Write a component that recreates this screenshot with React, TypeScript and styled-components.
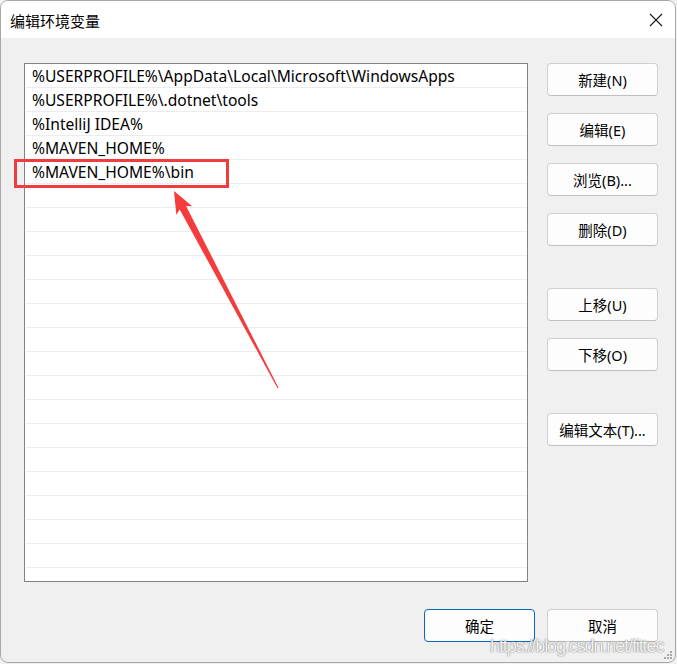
import React from "react";
import styled, { createGlobalStyle } from "styled-components";

const Global = createGlobalStyle`
  html, body { margin: 0; padding: 0; background: #f0f0f0; }
  body { font-family: "Noto Sans", "Noto Sans CJK SC", sans-serif; }
`;

const Window = styled.div`
  position: relative;
  box-sizing: border-box;
  width: 676px;
  height: 663px;
  border: 1px solid #a8a8a8;
  border-radius: 8px;
  overflow: hidden;
  background: #f0f0f0;
  display: flex;
  flex-direction: column;
`;

const TitleBar = styled.div`
  height: 37px;
  background: #ffffff;
  display: flex;
  align-items: center;
  justify-content: space-between;
  padding: 0 12px 0 9px;
  flex: none;
`;

const Title = styled.span`
  font-family: "Noto Sans CJK SC", sans-serif;
  font-size: 15px;
  color: #000;
  line-height: 1;
  margin-top: 1px;
`;

const CloseIcon = styled.svg`
  width: 14px;
  height: 14px;
`;

const Body = styled.div`
  flex: 1;
  display: flex;
  flex-direction: column;
  padding: 25px 17px 0 23px;
`;

const Main = styled.div`
  display: flex;
  gap: 19px;
`;

const List = styled.div`
  box-sizing: border-box;
  width: 504px;
  height: 519px;
  border: 1px solid #838383;
  background: #ffffff;
  overflow: hidden;
`;

const Row = styled.div`
  height: 23px;
  margin-left: 1px;
  border-bottom: 1px solid #ececec;
  display: flex;
  align-items: center;
  padding-left: 6px;
  padding-top: 1px;
  box-sizing: border-box;
  height: 24px;
  font-size: 15.6px;
  color: #000;
  white-space: nowrap;
`;

const Buttons = styled.div`
  display: flex;
  flex-direction: column;
  width: 111px;
`;

const Button = styled.button<{ $top?: number; $primary?: boolean }>`
  box-sizing: border-box;
  width: 111px;
  height: 33px;
  margin-top: ${(p) => p.$top ?? 0}px;
  border: 1px solid ${(p) => (p.$primary ? "#0a67c0" : "#d0d0d0")};
  border-bottom-color: ${(p) => (p.$primary ? "#0a67c0" : "#c0c0c0")};
  border-radius: 4px;
  background: #fdfdfd;
  font-family: "Noto Sans", "Noto Sans CJK SC", sans-serif;
  font-size: 14.5px;
  color: #000;
  padding: 0;
  display: flex;
  align-items: center;
  justify-content: center;
`;

const Footer = styled.div`
  display: flex;
  justify-content: flex-end;
  gap: 12px;
  margin-top: 27px;
`;

const Highlight = styled.div`
  position: absolute;
  left: 13px;
  top: 158px;
  width: 215px;
  height: 29px;
  box-sizing: border-box;
  border: 3px solid #f03c3c;
`;

const Arrow = styled.svg`
  position: absolute;
  left: 0;
  top: 0;
  width: 676px;
  height: 663px;
  pointer-events: none;
`;

const Watermark = styled.div`
  position: absolute;
  left: 489px;
  top: 637px;
  font-family: "Liberation Sans", sans-serif;
  font-size: 18px;
  line-height: 16px;
  letter-spacing: -1.1px;
  color: rgba(255, 255, 255, 0.92);
  text-shadow: 0 0 1px rgba(90, 90, 90, 0.8), 0 0 2px rgba(130, 130, 130, 0.6);
  white-space: nowrap;
  pointer-events: none;
`;

const Grip = styled.svg`
  position: absolute;
  right: 2px;
  bottom: 2px;
  width: 10px;
  height: 10px;
`;

const items = [
  "%USERPROFILE%\\AppData\\Local\\Microsoft\\WindowsApps",
  "%USERPROFILE%\\.dotnet\\tools",
  "%IntelliJ IDEA%",
  "%MAVEN_HOME%",
  "%MAVEN_HOME%\\bin",
];

const rows = Array.from({ length: 22 }, (_, i) => items[i] ?? "");

const tip = [173, 190];
const tail = [277, 387];
const dx = tip[0] - tail[0];
const dy = tip[1] - tail[1];
const len = Math.hypot(dx, dy);
const u = [dx / len, dy / len];
const n = [-u[1], u[0]];
const pt = (along: number, side: number) =>
  `${(tip[0] - u[0] * along + n[0] * side).toFixed(1)},${(tip[1] - u[1] * along + n[1] * side).toFixed(1)}`;
const arrowPoints = [
  pt(0, 0),
  pt(22, 9),
  pt(19, 3.6),
  pt(len, 0.6),
  pt(len, -0.6),
  pt(19, -3.6),
  pt(22, -9),
].join(" ");

export default function App() {
  return (
    <>
      <Global />
      <Window>
        <TitleBar>
          <Title>编辑环境变量</Title>
          <CloseIcon viewBox="0 0 14 14">
            <path d="M1 1 L13 13 M13 1 L1 13" stroke="#1a1a1a" strokeWidth="1.1" />
          </CloseIcon>
        </TitleBar>
        <Body>
          <Main>
            <List>
              {rows.map((r, i) => (
                <Row key={i}>{r}</Row>
              ))}
            </List>
            <Buttons>
              <Button>新建(N)</Button>
              <Button $top={17}>编辑(E)</Button>
              <Button $top={17}>浏览(B)...</Button>
              <Button $top={17}>删除(D)</Button>
              <Button $top={42}>上移(U)</Button>
              <Button $top={17}>下移(O)</Button>
              <Button $top={42}>编辑文本(T)...</Button>
            </Buttons>
          </Main>
          <Footer>
            <Button $primary>确定</Button>
            <Button>取消</Button>
          </Footer>
        </Body>
        <Highlight />
        <Arrow viewBox="0 0 676 663">
          <polygon points={arrowPoints} fill="#f53c3c" />
        </Arrow>
        <Watermark>https://blog.csdn.net/fittec</Watermark>
        <Grip viewBox="0 0 10 10">
          {[
            [7, 1],
            [7, 4],
            [4, 4],
            [7, 7],
            [4, 7],
            [1, 7],
          ].map(([x, y], i) => (
            <rect key={i} x={x} y={y} width="2" height="2" fill="#a8a8a8" />
          ))}
        </Grip>
      </Window>
    </>
  );
}
